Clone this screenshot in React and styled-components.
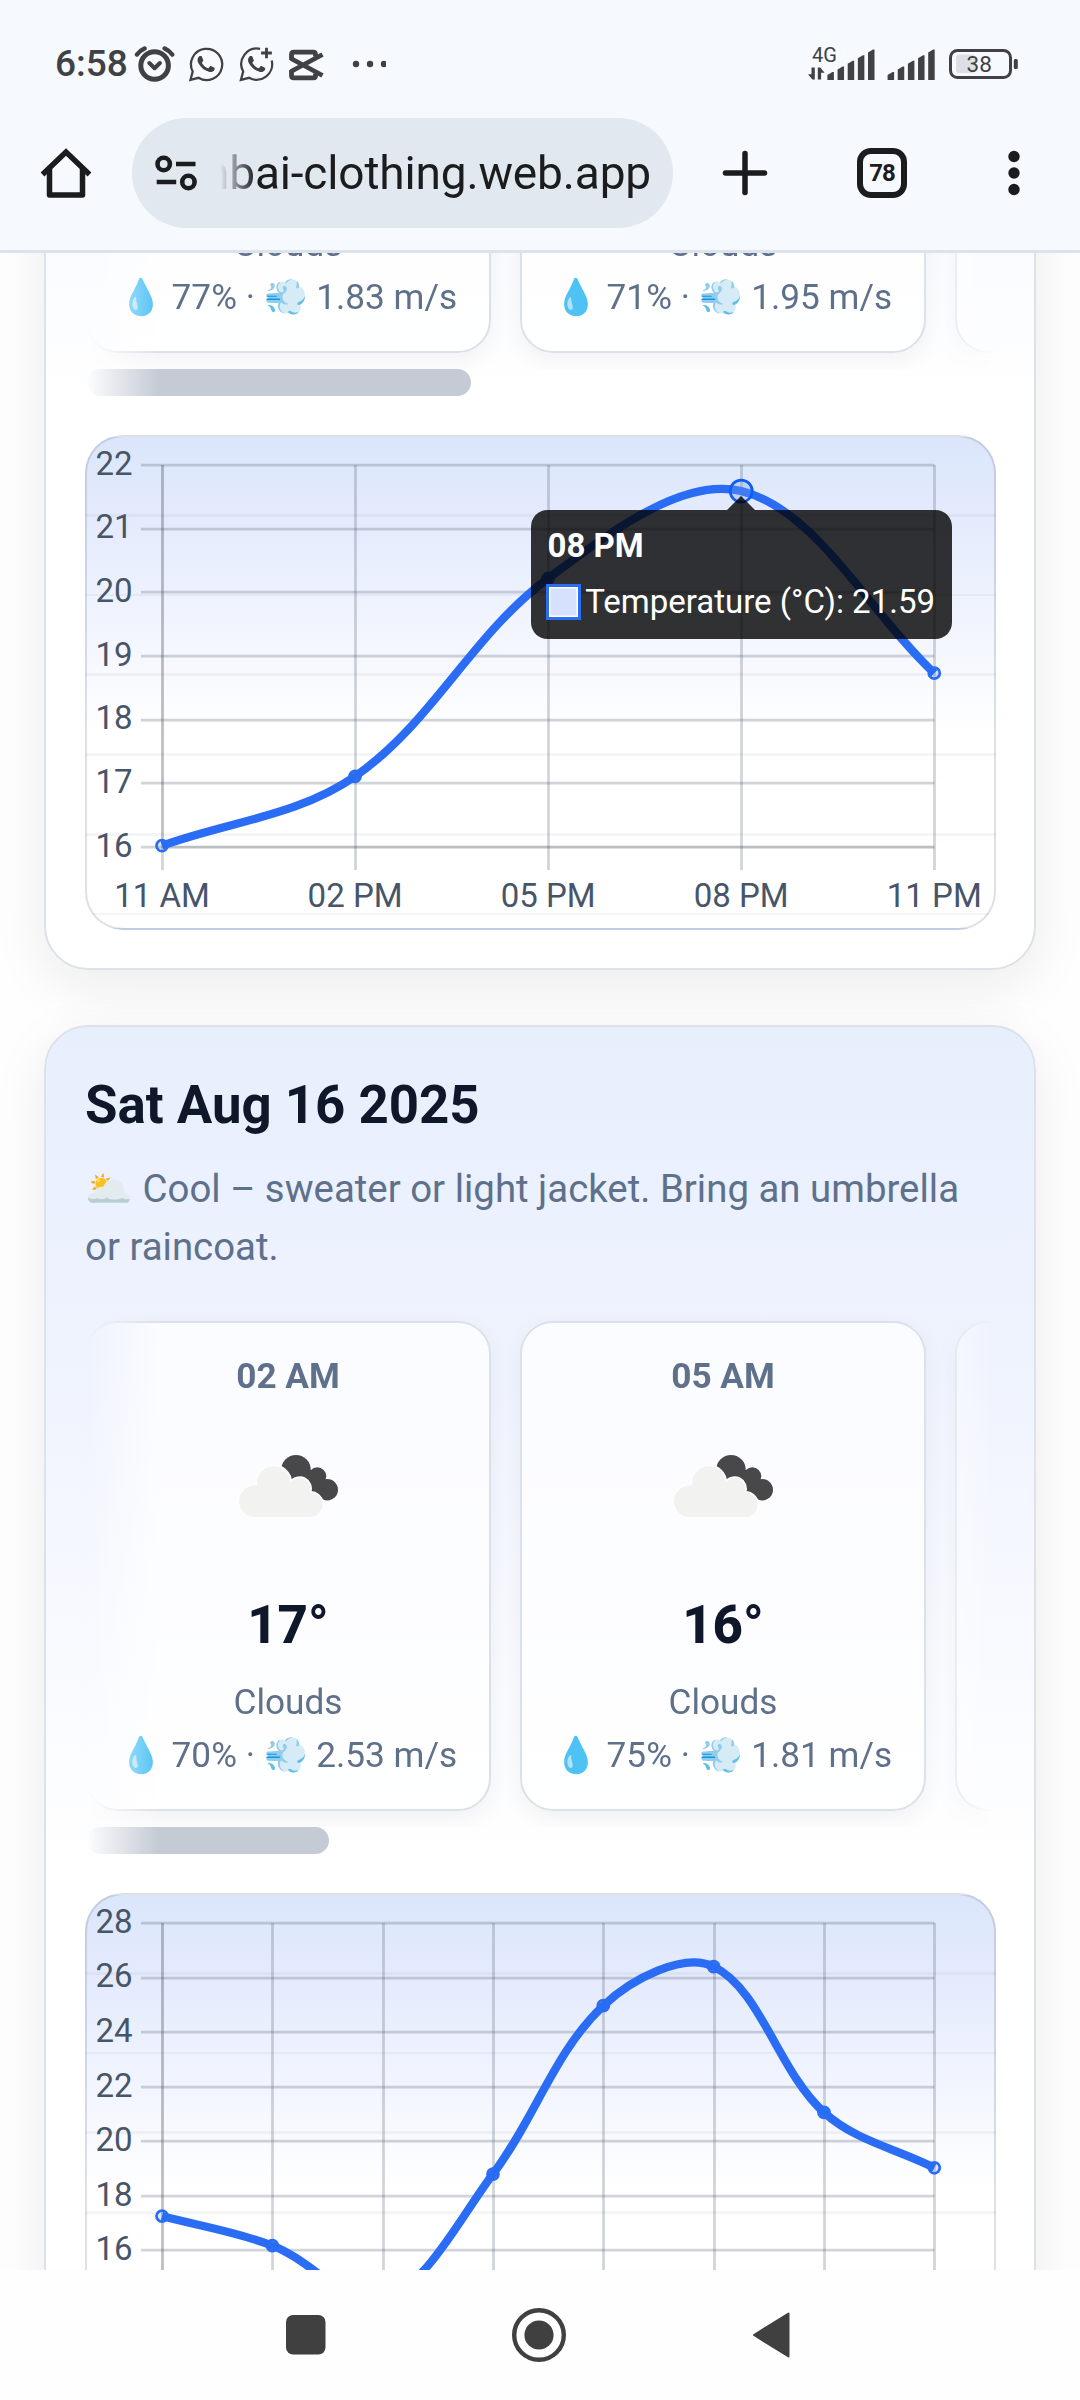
import { createGlobalStyle, styled } from 'styled-components'


function App() {
  return (
    <Phone>
      <GlobalStyle/>
      <StatusBar/>
      <BrowserBar/>
      <Page>
        <DayList>
          {days.map((day) => <DayCard key={day.id} day={day}/>)}
        </DayList>
      </Page>
      <NavBar/>
    </Phone>
  );
}

export default App;

const GlobalStyle = createGlobalStyle`
  * {
    box-sizing: border-box;
  }
  body {
    margin: 0;
    background: #fefefe;
    font-family: Roboto, "Noto Sans", sans-serif;
  }
  svg {
    display: block;
    flex: none;
  }
`;

const Phone = styled.div`
  width: 1080px;
  height: 2400px;
  display: flex;
  flex-direction: column;
  overflow: hidden;
`;

const Status = styled.header`
  height: 118px;
  padding: 10px 62px 0 55px;
  display: flex;
  align-items: center;
  justify-content: space-between;
  background: #f6f9fe;
  color: #404144;
`;

const StatusGroup = styled.div`
  display: flex;
  align-items: center;
`;

const Clock = styled.span`
  width: 79px;
  font-size: 37px;
  font-weight: 500;
  line-height: 44px;
`;

const Toolbar = styled.nav`
  height: 135px;
  padding: 0 40px 0 38px;
  display: flex;
  align-items: flex-start;
  background: #f6f9fe;
  border-bottom: 3px solid #dde3ea;
  color: #1b1c1e;
`;

const ToolButton = styled.div`
  width: ${props => props.$width}px;
  height: 110px;
  margin-left: ${props => props.$gap || 0}px;
  flex: none;
  display: flex;
  align-items: center;
  justify-content: center;
`;

const AddressPill = styled.div`
  width: 541px;
  height: 110px;
  flex: none;
  margin-left: 38px;
  padding: 0 22px 0 22px;
  display: flex;
  align-items: center;
  background: #e2e8f0;
  border-radius: 55px;
`;

const Address = styled.div`
  width: 432px;
  margin-left: 22px;
  display: flex;
  justify-content: flex-end;
  overflow: hidden;
  font-size: 46px;
  line-height: 60px;
  letter-spacing: -0.15px;
  white-space: nowrap;
  mask-image: linear-gradient(90deg, transparent, #000 36px);
`;

const TabCount = styled.div`
  width: 50px;
  height: 50px;
  display: flex;
  align-items: center;
  justify-content: center;
  border: 6px solid #1b1c1e;
  border-radius: 14px;
  font-size: 24px;
  font-weight: 700;
  letter-spacing: -1px;
`;

const Page = styled.main`
  height: 2017px;
  overflow: hidden;
  background: #fefefe;
`;

const DayList = styled.div`
  display: flex;
  flex-direction: column;
  gap: 55px;
  margin-top: -686px;
  padding: 0 44px;
`;

const Card = styled.section`
  height: 1403px;
  flex: none;
  display: flex;
  flex-direction: column;
  justify-content: flex-end;
  padding: 38px 38px 38px 39px;
  border: 2px solid #dde2e9;
  border-radius: 44px;
  background: linear-gradient(180deg, #e7effd, #eff3fe 24%, #fff 60%);
  box-shadow: 0 16px 55px rgba(15, 23, 42, 0.08);
`;

const DayTitle = styled.h2`
  margin: 0 0 15px;
  color: #0f172a;
  font-size: 52.8px;
  font-weight: 700;
  line-height: 79px;
`;

const Advice = styled.p`
  margin: 0 0 40px;
  color: #5f708b;
  font-size: 38.4px;
  line-height: 57.75px;
`;

const Scroller = styled.div`
  display: flex;
  flex-direction: column;
  margin-bottom: 39px;
  mask-image: linear-gradient(90deg, transparent, #000 8%, #000 92%, transparent);
`;

const HourRow = styled.div`
  display: flex;
  gap: 29px;
  padding: 5.5px 0 16px;
  overflow: hidden;
`;

const ScrollTrack = styled.div`
  height: 27px;
  padding-left: 2px;
`;

const ScrollThumb = styled.div`
  height: 27px;
  border-radius: 14px;
  background: #c5cbd5;
`;

const Hour = styled.div`
  width: 406px;
  height: 490px;
  flex: none;
  display: flex;
  flex-direction: column;
  align-items: center;
  justify-content: flex-end;
  padding-bottom: 27px;
  border: 2px solid #dbe1e8;
  border-radius: 33px;
  background: rgba(255, 255, 255, 0.7);
  box-shadow: 0 8px 24px rgba(15, 23, 42, 0.05);
  color: #5f708b;
  font-size: 35.2px;
  line-height: 53.25px;
  white-space: nowrap;
`;

const HourLabel = styled.div`
  margin-bottom: 48px;
  font-weight: 700;
`;

const Degrees = styled.div`
  margin: 64px 0 11px;
  color: #0f172a;
  font-size: 52.8px;
  font-weight: 800;
  line-height: 79px;
`;

const ChartBox = styled.div`
  position: relative;
  height: 495px;
  flex: none;
  overflow: hidden;
  border: 2px solid rgba(100, 116, 139, 0.22);
  border-radius: 38px;
  background:
    repeating-linear-gradient(180deg, transparent 0 77px, rgba(15, 23, 42, 0.045) 77px 79.75px),
    linear-gradient(180deg, #dbe6fb, #e6ecfd 20%, #fff 60%);
`;

const AxisText = styled.text`
  fill: #475569;
  font-size: 33px;
`;

const Tooltip = styled.div`
  position: absolute;
  left: 444px;
  top: 73px;
  width: 420.5px;
  height: 129px;
  padding: 16px 16.5px;
  border-radius: 16.5px;
  background: rgba(0, 0, 0, 0.8);
  color: #fff;
  font-size: 33px;
  line-height: 40px;

  &::before {
    content: '';
    position: absolute;
    left: 196px;
    top: -14px;
    border: 14px solid transparent;
    border-top: 0;
    border-bottom-color: rgba(0, 0, 0, 0.8);
  }
`;

const TooltipTitle = styled.div`
  font-weight: 700;
`;

const TooltipRow = styled.div`
  display: flex;
  align-items: center;
  gap: 4.5px;
  margin: 16px 0 0 -2px;
  white-space: nowrap;
`;

const Swatch = styled.span`
  width: 36px;
  height: 36px;
  border: 3px solid #2b6ef5;
  background: #d6e2fd;
  box-shadow: inset 0 0 0 1.5px #fff;
`;

const Nav = styled.footer`
  height: 130px;
  flex: none;
  display: flex;
  align-items: center;
  justify-content: center;
  gap: 186px;
  padding-right: 4px;
  background: #fefefe;
`;

const days = [
  {
    id: 'fri',
    thumb: 384,
    hours: [
      { id: 1, sky: 'Clouds', humidity: 77, wind: '1.83' },
      { id: 2, sky: 'Clouds', humidity: 71, wind: '1.95' },
      { id: 3 },
    ],
    chart: {
      max: 22,
      min: 16,
      step: 1,
      labels: ['11 AM', '02 PM', '05 PM', '08 PM', '11 PM'],
      temps: [16.02, 17.11, 20.22, 21.59, 18.73],
      active: 3,
    },
  },
  {
    id: 'sat',
    title: 'Sat Aug 16 2025',
    advice: '🌥️ Cool – sweater or light jacket. Bring an umbrella or raincoat.',
    thumb: 242,
    hours: [
      { id: 1, time: '02 AM', temp: 17, sky: 'Clouds', humidity: 70, wind: '2.53' },
      { id: 2, time: '05 AM', temp: 16, sky: 'Clouds', humidity: 75, wind: '1.81' },
      { id: 3 },
    ],
    chart: {
      max: 28,
      min: 14,
      step: 2,
      labels: ['', '', '', '', '', '', '', ''],
      temps: [17.26, 16.18, 14.2, 18.8, 24.97, 26.4, 21.06, 19.03],
    },
  },
];

function DayCard({ day }) {
  return <Card>
    {day.title && <DayTitle>{day.title}</DayTitle>}
    {day.advice && <Advice>{day.advice}</Advice>}
    <Scroller>
      <HourRow>
        {day.hours.map((hour) => <HourCard key={hour.id} hour={hour}/>)}
      </HourRow>
      <ScrollTrack>
        <ScrollThumb style={{ width: day.thumb }}/>
      </ScrollTrack>
    </Scroller>
    <ChartBox>
      <TempChart {...day.chart}/>
      {day.chart.active && <ChartTooltip
        label={day.chart.labels[day.chart.active]}
        value={day.chart.temps[day.chart.active]}
      />}
    </ChartBox>
  </Card>
}

function HourCard({ hour }) {
  return <Hour>
    {hour.time && <HourLabel>{hour.time}</HourLabel>}
    {hour.time && <CloudIcon/>}
    {hour.temp && <Degrees>{hour.temp}°</Degrees>}
    {hour.sky && <div>{hour.sky}</div>}
    {hour.humidity && <div>💧 {hour.humidity}% · 💨 {hour.wind} m/s</div>}
  </Hour>
}

function ChartTooltip({ label, value }) {
  return <Tooltip>
    <TooltipTitle>{label}</TooltipTitle>
    <TooltipRow>
      <Swatch/>
      <span>Temperature (°C): {value}</span>
    </TooltipRow>
  </Tooltip>
}

const area = { left: 75, right: 847.3, top: 28, bottom: 410 };

// cubic path through the points, control points taken from the neighbours
function smoothPath(points, tension) {
  const controls = points.map((p, i) => {
    const prev = points[i - 1] || p;
    const next = points[i + 1] || p;
    const d1 = Math.hypot(p[0] - prev[0], p[1] - prev[1]);
    const d2 = Math.hypot(next[0] - p[0], next[1] - p[1]);
    const a = tension * d1 / (d1 + d2);
    const b = tension * d2 / (d1 + d2);
    return {
      before: [p[0] - a * (next[0] - prev[0]), p[1] - a * (next[1] - prev[1])],
      after: [p[0] + b * (next[0] - prev[0]), p[1] + b * (next[1] - prev[1])],
    };
  });
  return points.map((p, i) => (
    i === 0 ? `M${p}` : `C${controls[i - 1].after} ${controls[i].before} ${p}`
  )).join(' ');
}

function TempChart({ max, min, step, labels, temps, active }) {
  const stepX = (area.right - area.left) / (temps.length - 1);
  const toY = (temp) => area.top + (max - temp) / (max - min) * (area.bottom - area.top);
  const points = temps.map((temp, i) => [area.left + i * stepX, toY(temp)]);
  const ticks = [];
  for (let t = max; t >= min; t -= step) ticks.push(t);

  return <svg width="907" height="491" viewBox="0 0 907 491">
    <g stroke="rgba(71, 85, 105, 0.25)" strokeWidth="2.75">
      {ticks.map((t) => <path key={t} d={`M54 ${Math.round(toY(t)) + 0.2}H${area.right}`}/>)}
      {points.map(([x]) => <path key={x} d={`M${Math.round(x) + 0.5} ${area.top}V433`}/>)}
    </g>
    <g stroke="rgba(0, 0, 0, 0.1)" strokeWidth="2.75">
      <path d={`M75.5 ${area.top}V${area.bottom}`}/>
      <path d={`M${area.left} 410.2H${area.right}`}/>
    </g>
    <path d={smoothPath(points, 0.35)} fill="none" stroke="#2a6df4" strokeWidth="8.25"/>
    {points.map(([x, y], i) => (
      <circle
        key={x}
        cx={x}
        cy={y}
        r={i === active ? 11 : 5.5}
        fill={i === active ? 'rgba(120, 160, 250, 0.3)' : 'rgba(43, 110, 245, 0.15)'}
        stroke={i === active ? '#0f5cf7' : '#2a6df4'}
        strokeWidth="2.75"
      />
    ))}
    {ticks.map((t) => <AxisText key={t} x="45.5" y={toY(t) + 9.8} textAnchor="end">{t}</AxisText>)}
    {labels.map((label, i) => label && (
      <AxisText key={label} x={points[i][0]} y="470" textAnchor="middle">{label}</AxisText>
    ))}
  </svg>
}

function CloudIcon() {
  return <svg width="104" height="70" viewBox="0 0 104 70">
    <g fill="#48484a">
      <circle cx="60" cy="17.7" r="14.7"/>
      <circle cx="81.3" cy="24.3" r="9"/>
      <circle cx="91.3" cy="37.7" r="10.7"/>
      <path d="M60 17L75 18L84 27L91 47L60 40Z"/>
    </g>
    <g fill="#f2f2f0" stroke="#fdfdfe" strokeWidth="3" paintOrder="stroke">
      <path d="M18.7 65A15.7 15.7 0 0 1 18.7 33.6L21.4 33.4A16.7 16.7 0 1 1 54.6 31A10.7 10.7 0 0 1 73.7 40.5A12.3 12.3 0 0 1 75.7 65Z"/>
    </g>
  </svg>
}

const phonePath = 'M17.472 14.382c-.297-.149-1.758-.867-2.03-.967-.273-.099-.471-.148-.67.15-.197.297-.767.966-.94 1.164-.173.199-.347.223-.644.075-.297-.15-1.255-.463-2.39-1.475-.883-.788-1.48-1.761-1.653-2.059-.173-.297-.018-.458.13-.606.134-.133.298-.347.446-.52.149-.174.198-.298.298-.497.099-.198.05-.371-.025-.52-.075-.149-.669-1.612-.916-2.207-.242-.579-.487-.5-.669-.51-.173-.008-.371-.01-.57-.01-.198 0-.52.074-.792.372-.272.297-1.04 1.016-1.04 2.479 0 1.462 1.065 2.875 1.213 3.074.149.198 2.096 3.2 5.077 4.487.709.306 1.262.489 1.694.625.712.227 1.36.195 1.871.118.571-.085 1.758-.719 2.006-1.413.248-.694.248-1.289.173-1.413-.074-.124-.272-.198-.57-.347';

function StatusBar() {
  return <Status>
    <StatusGroup>
      <Clock>6:58</Clock>
      <svg width="252" height="40" viewBox="134 43 252 40" fill="none" stroke="currentColor">
        <circle cx="154.6" cy="64.5" r="13.8" strokeWidth="5"/>
        <path d="M149.3 62l5.3 5.2 5.3-5.2" strokeWidth="4" strokeLinecap="round" strokeLinejoin="round"/>
        <path d="M137 53.5q3-4 7.5-6M172.2 53.5q-3-4-7.5-6" strokeWidth="4.5" strokeLinecap="round"/>
        <g transform="translate(189 46) scale(1.42)">
          <path d="M1 23.2l1.6-5.9A11 11 0 1 1 6.7 21.7z" strokeWidth="1.6"/>
          <path d={phonePath} fill="currentColor" stroke="none"/>
        </g>
        <g transform="translate(239.5 46) scale(1.42)">
          <path d="M14.5 1.3A11 11 0 0 0 2.6 17.3L1 23.2l5.7-1.5A11 11 0 0 0 22.7 9.5" strokeWidth="1.6"/>
          <path d={phonePath} fill="currentColor" stroke="none"/>
          <path d="M19 0.5v7.5M15.2 4.2h7.6" strokeWidth="2"/>
        </g>
        <path d="M291.5 59v-5.5q0-2.3 2.3-2.3H313.5q2 0 2 2.3v2M291.5 69v5.5q0 2.3 2.3 2.3H313.5q2 0 2-2.3v-2" strokeWidth="4.8"/>
        <path d="M291 57.5L322.5 74.5M291 70.5L322.5 53.5" strokeWidth="4.8"/>
        <g fill="currentColor" stroke="none">
          <circle cx="356" cy="63" r="3.2"/>
          <circle cx="370" cy="63" r="3.2"/>
          <circle cx="384" cy="63" r="3.2"/>
        </g>
      </svg>
    </StatusGroup>
    <StatusGroup>
      <svg width="212" height="40" viewBox="806 43 212 40" fill="currentColor">
        <text x="812" y="61.2" fontSize="20">4G</text>
        <path d="M814.8 66.5v12h-2.5l-4.3-5.2h3.5v-6.8zM817.8 78.5v-12h2.5l4.3 5.2h-3.5v6.8z"/>
        <SignalBars x={827.4}/>
        <SignalBars x={887.6}/>
        <rect x="950.5" y="49.5" width="60" height="27" rx="7" fill="none" stroke="currentColor" strokeWidth="3"/>
        <rect x="956" y="53.5" width="19" height="18.5" rx="3" fill="#dcdfe4"/>
        <rect x="1013.8" y="58" width="4" height="10" rx="1.5"/>
        <text x="966.6" y="71.3" fontSize="22.5">38</text>
      </svg>
    </StatusGroup>
  </Status>
}

function SignalBars({ x }) {
  return [0, 1, 2, 3, 4].map((i) => {
    const left = x + i * 10.15;
    const top = 71 - i * 5.6;
    return <path key={i} d={`M${left} 79V${top + 3}L${left + 5} ${top}h1.5V79z`}/>
  });
}

function BrowserBar() {
  return <Toolbar>
    <ToolButton $width={56}>
      <svg width="52" height="52" viewBox="0 0 52 52" fill="none" stroke="currentColor" strokeWidth="5.5" strokeLinejoin="round">
        <path d="M2.5 27.5L26 5l23.5 22.5" strokeLinejoin="miter"/>
        <path d="M9.5 22V48H42.5V22"/>
      </svg>
    </ToolButton>
    <AddressPill>
      <svg width="44" height="36" viewBox="154 155 44 36" fill="none" stroke="currentColor">
        <circle cx="163.7" cy="164" r="6.2" strokeWidth="4.6"/>
        <circle cx="188.4" cy="182" r="6.2" strokeWidth="4.6"/>
        <path d="M176 164h19.5M156.7 182h19.5" strokeWidth="4.6"/>
      </svg>
      <Address>mbai-clothing.web.app</Address>
    </AddressPill>
    <ToolButton $width={50} $gap={47}>
      <svg width="50" height="50" viewBox="0 0 50 50" stroke="currentColor" strokeWidth="5.5" strokeLinecap="round">
        <path d="M25 5.5v39M5.5 25h39"/>
      </svg>
    </ToolButton>
    <ToolButton $width={50} $gap={87}>
      <TabCount>78</TabCount>
    </ToolButton>
    <ToolButton $width={14} $gap={100}>
      <svg width="14" height="46" viewBox="0 0 14 46" fill="currentColor">
        <circle cx="7" cy="6.5" r="5.7"/>
        <circle cx="7" cy="23" r="5.7"/>
        <circle cx="7" cy="39.5" r="5.7"/>
      </svg>
    </ToolButton>
  </Toolbar>
}

function NavBar() {
  return <Nav>
    <svg width="40" height="40" viewBox="0 0 40 40">
      <rect width="39.5" height="39.5" rx="7" fill="#404040"/>
    </svg>
    <svg width="54" height="54" viewBox="0 0 54 54">
      <circle cx="27" cy="27" r="24.8" fill="none" stroke="#404040" strokeWidth="4.4"/>
      <circle cx="27" cy="27" r="14.6" fill="#404040"/>
    </svg>
    <svg width="38" height="46" viewBox="0 0 38 46">
      <path d="M36.5 1.5V44.5L2 23z" fill="#404040" stroke="#404040" strokeWidth="2" strokeLinejoin="round"/>
    </svg>
  </Nav>
}
